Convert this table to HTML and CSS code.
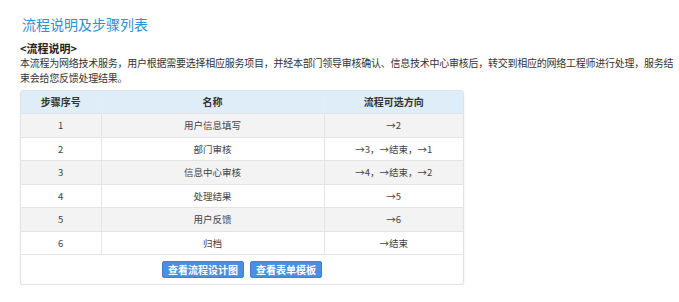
FILE: index.html
```html
<!DOCTYPE html>
<html lang="zh">
<head>
<meta charset="utf-8">
<title>流程说明及步骤列表</title>
<link rel="stylesheet" href="styles.css">
</head>
<body>
<div class="page">
  <h1 class="title">流程说明及步骤列表</h1>
  <h2 class="subtitle">&lt;流程说明&gt;</h2>
  <p class="desc">本流程为网络技术服务，用户根据需要选择相应服务项目，并经本部门领导审核确认、信息技术中心审核后，转交到相应的网络工程师进行处理，服务结束会给您反馈处理结果。</p>
  <div class="panel">
    <table class="steps">
      <colgroup><col class="c1"><col class="c2"><col class="c3"></colgroup>
      <thead>
        <tr><th>步骤序号</th><th>名称</th><th>流程可选方向</th></tr>
      </thead>
      <tbody>
        <tr><td>1</td><td>用户信息填写</td><td>→2</td></tr>
        <tr><td>2</td><td>部门审核</td><td>→3，→结束，→1</td></tr>
        <tr><td>3</td><td>信息中心审核</td><td>→4，→结束，→2</td></tr>
        <tr><td>4</td><td>处理结果</td><td>→5</td></tr>
        <tr><td>5</td><td>用户反馈</td><td>→6</td></tr>
        <tr><td>6</td><td>归档</td><td>→结束</td></tr>
      </tbody>
    </table>
    <div class="actions">
      <button class="btn">查看流程设计图</button>
      <button class="btn">查看表单模板</button>
    </div>
  </div>
</div>
</body>
</html>
```
FILE: styles.css
```css
html, body { margin: 0; padding: 0; background: #fff; }
body {
  font-family: "Noto Sans CJK SC", "Liberation Sans", sans-serif;
  color: #333;
}
.page { padding: 14px 0 0 20px; width: 654px; }
.title {
  margin: 0 0 7px 2px;
  font-size: 14px;
  line-height: 20px;
  font-weight: normal;
  color: #2f8fcf;
}
.subtitle {
  margin: 0;
  font-size: 11px;
  line-height: 14px;
  font-weight: bold;
  color: #222;
}
.desc {
  margin: 0 0 4.5px 0;
  font-size: 10px;
  letter-spacing: -0.25px;
  line-height: 15px;
  color: #333;
}
.panel {
  width: 442px;
  border: 1px solid #e2e2e2;
  border-radius: 3px;
  box-shadow: 0 1px 2px rgba(0,0,0,0.08);
  background: #fff;
}
.steps {
  width: 100%;
  border-collapse: collapse;
  table-layout: fixed;
  font-size: 9.5px;
  color: #444;
}
.c1 { width: 80px; }
.c2 { width: 223px; }
.c3 { width: 139px; }
.steps th, .steps td {
  height: 22.5px;
  padding: 0;
  text-align: center;
  border-bottom: 1px solid #e4e4e4;
  border-right: 1px solid #e4e4e4;
}
.steps th:last-child, .steps td:last-child { border-right: none; }
.steps thead th {
  background: #deedf8;
  font-weight: bold;
  font-size: 10px;
  color: #333;
  border-right-color: #e4eef6;
}
.steps tbody tr:nth-child(odd) td { background: #f3f3f3; }
.actions {
  display: flex;
  justify-content: center;
  gap: 6px;
  padding: 6px 0 6px;
}
.btn {
  font-family: "Noto Sans CJK SC", sans-serif;
  font-size: 10px;
  font-weight: bold;
  color: #fff;
  background: #4a8fe0;
  border: 1px solid #3d7fd0;
  border-radius: 2px;
  height: 17px;
  padding: 0 5px;
  line-height: 15px;
}
```
